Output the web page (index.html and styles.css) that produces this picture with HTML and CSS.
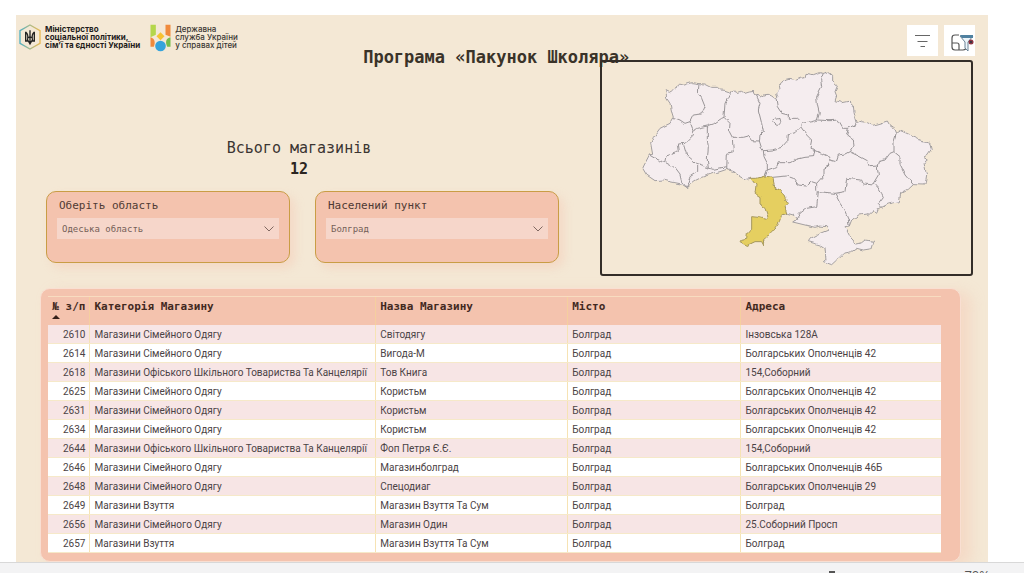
FILE: index.html
```html
<!DOCTYPE html>
<html lang="uk">
<head>
<meta charset="utf-8">
<title>Програма «Пакунок Школяра»</title>
<link rel="stylesheet" href="styles.css">
</head>
<body>
<main class="report">
  <header class="report-header">
    <div class="logos">
      <div class="logo">
        <svg class="logo-ministry" viewBox="0 0 66 78" aria-hidden="true">
          <defs><linearGradient id="hex" x1="0" x2="1"><stop offset="0" stop-color="#4fb0c4"/><stop offset=".5" stop-color="#a8b98a"/><stop offset="1" stop-color="#e9b952"/></linearGradient></defs>
          <path d="M33 3 63 20V58L33 75 3 58V20Z" fill="none" stroke="url(#hex)" stroke-width="4"/>
          <path d="M20 23V51H28L33 60 38 51H46V23M33 19V58M20 24C28 31 28 40 25 50M46 24C38 31 38 40 41 50M25 43Q33 35 41 43" fill="none" stroke="#222" stroke-width="4"/>
        </svg>
        <p class="logo-text logo-text-bold">Міністерство<br>соціальної політики,<br>сім’ї та єдності України</p>
      </div>
      <div class="logo">
        <svg class="logo-service" viewBox="0 0 62 84" aria-hidden="true">
          <path d="M1 2H17V32L1 40Z" fill="#b5d64a"/>
          <path d="M46 2H61V38L46 32Z" fill="#f08a3c"/>
          <path d="M31 25 43 37 31 49 19 37Z" fill="#f6c232"/>
          <path d="M1 40C12 43 17 53 11 68H1Z" fill="#f08a3c"/>
          <path d="M61 40C48 43 44 53 51 68H61Z" fill="#75bd4b"/>
          <circle cx="31" cy="66" r="16" fill="#35a3dc"/>
        </svg>
        <p class="logo-text">Державна<br>служба України<br>у справах дітей</p>
      </div>
    </div>
    <h1 class="title">Програма «Пакунок Школяра»</h1>
    <div class="actions">
      <button class="action" type="button" aria-label="Фільтри">
        <svg viewBox="0 0 31 31" aria-hidden="true"><path d="M8 10.500H23M10.500 16.500H20.500M13.500 21.500H18" fill="none" stroke="#666" stroke-width="1.200"/></svg>
      </button>
      <button class="action" type="button" aria-label="Очистити фільтри">
        <svg viewBox="0 0 31 31" aria-hidden="true">
          <path d="M15 10H11Q8 10 8 13V22Q8 25 11 25H19Q22 25 22 22V18M8 18H13Q15 18 15 20V25" fill="none" stroke="#555" stroke-width="1.200"/>
          <path d="M16 11H29L24 17V26L21 23V17Z" fill="#eef5fa" stroke="#6b8497"/>
          <path d="M16 10H29V13H18Z" fill="#4f81a0"/>
          <circle cx="27" cy="17" r="2.500" fill="#8d3441"/><path d="M26 16 28 18M28 16 26 18" stroke="#3e3542"/>
        </svg>
      </button>
    </div>
  </header>

  <section class="overview">
    <div class="summary">
      <div class="total">
        <p class="total-label">Всього магазинів</p>
        <p class="total-value">12</p>
      </div>
      <div class="slicers">
        <div class="slicer">
          <label class="slicer-label" for="region">Оберіть область</label>
          <div class="slicer-field">
            <select class="slicer-select" id="region"><option>Одеська область</option></select>
            <svg class="chevron" viewBox="0 0 10 6" aria-hidden="true"><path d="M.5.5 5 5 9.500.5"/></svg>
          </div>
        </div>
        <div class="slicer">
          <label class="slicer-label" for="city">Населений пункт</label>
          <div class="slicer-field">
            <select class="slicer-select" id="city"><option>Болград</option></select>
            <svg class="chevron" viewBox="0 0 10 6" aria-hidden="true"><path d="M.5.5 5 5 9.500.5"/></svg>
          </div>
        </div>
      </div>
    </div>
    <div class="map">
      <svg class="map-drawing" viewBox="-84 6 1107 636" role="img" aria-label="Мапа областей України">
        <defs><filter id="coast" x="-5%" y="-5%" width="110%" height="110%"><feTurbulence type="fractalNoise" baseFrequency=".06" numOctaves="1" seed="4"/><feDisplacementMap in="SourceGraphic" scale="13" xChannelSelector="R" yChannelSelector="G"/></filter></defs>
        <g filter="url(#coast)" stroke-linejoin="round">
          <path class="land" d="M108 92 118 97 140 84 145 72 160 76 185 68 207 71 225 72 245 82 262 82 272 90 285 91 302 97 312 93 322 98 335 94 345 100 358 96 372 94 378 108 384 106 390 111 402 104 415 103 425 108 438 117 444 112 440 98 450 88 448 76 460 60 480 55 500 60 510 55 525 52 528 40 550 44 568 38 580 40 595 36 608 46 608 65 622 78 615 95 620 108 615 122 635 128 655 124 670 138 672 155 682 190 695 185 712 188 728 196 750 190 772 183 780 197 795 208 800 220 812 212 835 222 860 232 865 242 900 250 904 268 892 285 880 292 895 300 882 310 890 345 885 375 850 374 835 388 812 400 808 425 775 432 755 442 745 448 740 460 730 452 712 468 715 458 690 462 665 480 658 498 645 500 650 510 660 530 678 552 695 548 705 540 732 544 725 566 700 570 680 565 665 575 640 580 620 600 605 614 580 605 588 598 585 565 570 555 535 545 542 535 570 520 595 510 588 500 570 498 555 502 525 495 488 486 500 478 490 465 472 460 455 465 362 355 345 358 330 350 312 335 290 328 270 335 250 340 215 352 195 362 170 382 155 372 120 365 100 360 75 362 50 345 38 325 45 310 58 285 68 283 62 250 70 232 90 205 120 190 130 172 125 155 120 130 110 115Z"/>
          <path class="border" d="M207 71 205 100 215 115 225 140 215 162 190 165 180 185 190 212M130 172 150 180 165 190 180 185M190 212 200 205 232 198 250 192 275 175 282 172M302 97 285 130 282 172 300 190 298 215 307 232M190 212 190 225 165 250 145 252 148 275 108 288 104 308M58 285 75 295 104 308 135 325 150 345 155 365 170 382M160 252 170 285 200 310 225 318 235 325M203 315 203 335 180 350 170 382M232 198 232 240 235 260 232 300 235 325 250 328 290 320M290 328 292 280 310 275 307 232 340 232 355 228 365 242 388 243M380 108 390 130 385 150 395 190 400 215 390 225 388 243 395 265 400 272 425 270 455 262 470 245 472 225 495 218 512 200M438 117 442 140 455 160 475 165 475 175 500 175 515 190M425 180 435 172 440 178 450 175 452 185 442 197 432 190Z"/>
          <path class="border" d="M580 40 572 60 575 80 560 110 562 135 568 160 562 180M515 190 545 185 562 180 600 182 625 180 640 205 655 205 682 190M515 190 512 200 530 225 545 240 540 265 555 268 550 290M412 330 440 320 445 308 480 308 500 298 525 292 550 290M550 270 575 280 595 290 600 300 618 305 625 285 645 282 658 275M655 205 650 225 670 240 672 255 658 275 690 290 712 302 718 320 742 318 745 305 765 300 780 280 792 275M800 218 792 245 792 275 810 290 810 315 825 345 850 374M742 318 745 345 730 370 742 380 755 400 760 410 745 430 755 442M732 375 700 372 695 360 650 355 645 395 615 400 630 430 640 445 655 480 658 498M615 400 565 395 560 440 530 445 510 460 495 482M428 352 470 348 490 355 505 375 530 378 545 365 560 370 560 395M600 300 595 318 582 325 582 345 560 370M400 272 402 290 412 310 412 330 405 348"/>
          <path class="land selected" d="M362 355 380 355 405 348 428 352 435 385 455 392 465 415 475 430 465 440 470 460 455 465 448 485 430 510 410 530 400 540 402 558 395 545 375 545 350 557 330 545 335 538 350 535 352 520 365 505 365 470 385 472 410 478 415 475 405 445 390 435 390 410 375 400 378 375Z"/>
        </g>
      </svg>
    </div>
  </section>

  <section class="table-card">
    <table class="shops">
      <colgroup><col class="col-id"><col class="col-category"><col class="col-name"><col class="col-city"><col class="col-address"></colgroup>
      <thead>
        <tr><th class="id" scope="col" aria-sort="ascending">№ з/п<span class="sort"></span></th><th scope="col">Категорія Магазину</th><th scope="col">Назва Магазину</th><th scope="col">Місто</th><th scope="col">Адреса</th></tr>
      </thead>
      <tbody>
        <tr><td class="id">2610</td><td>Магазини Сімейного Одягу</td><td>Світодягу</td><td>Болград</td><td>Інзовська 128А</td></tr>
        <tr><td class="id">2614</td><td>Магазини Сімейного Одягу</td><td>Вигода-М</td><td>Болград</td><td>Болгарських Ополченців 42</td></tr>
        <tr><td class="id">2618</td><td>Магазини Офіського Шкільного Товариства Та Канцелярії</td><td>Тов Книга</td><td>Болград</td><td>154,Соборний</td></tr>
        <tr><td class="id">2625</td><td>Магазини Сімейного Одягу</td><td>Користьм</td><td>Болград</td><td>Болгарських Ополченців 42</td></tr>
        <tr><td class="id">2631</td><td>Магазини Сімейного Одягу</td><td>Користьм</td><td>Болград</td><td>Болгарських Ополченців 42</td></tr>
        <tr><td class="id">2634</td><td>Магазини Сімейного Одягу</td><td>Користьм</td><td>Болград</td><td>Болгарських Ополченців 42</td></tr>
        <tr><td class="id">2644</td><td>Магазини Офіського Шкільного Товариства Та Канцелярії</td><td>Фоп Петря Є.Є.</td><td>Болград</td><td>154,Соборний</td></tr>
        <tr><td class="id">2646</td><td>Магазини Сімейного Одягу</td><td>Магазинболград</td><td>Болград</td><td>Болгарських Ополченців 46Б</td></tr>
        <tr><td class="id">2648</td><td>Магазини Сімейного Одягу</td><td>Спецодиаг</td><td>Болград</td><td>Болгарських Ополченців 29</td></tr>
        <tr><td class="id">2649</td><td>Магазини Взуття</td><td>Магазин Взуття Та Сум</td><td>Болград</td><td>Болград</td></tr>
        <tr><td class="id">2656</td><td>Магазини Сімейного Одягу</td><td>Магазин Один</td><td>Болград</td><td>25.Соборний Просп</td></tr>
        <tr><td class="id">2657</td><td>Магазини Взуття</td><td>Магазин Взуття Та Сум</td><td>Болград</td><td>Болград</td></tr>
      </tbody>
    </table>
  </section>
</main>
<footer class="status-bar">
  <span class="zoom-handle"></span>
  <span class="zoom-value">70%</span>
</footer>
</body>
</html>
```
FILE: styles.css
```css
* { box-sizing: border-box; }

body {
  display: flex;
  flex-direction: column;
  height: 100vh;
  margin: 0;
  overflow: hidden;
  background: #fff;
  color: #3b3532;
  font-family: "Open Sans", "Noto Sans", sans-serif;
}

h1, p { margin: 0; }

.report {
  flex: none;
  margin: 15px 36px 0 16px;
  overflow: hidden;
  background: #f4e8d5;
}

.report-header {
  display: grid;
  grid-template-columns: 36% auto 1fr;
  min-height: 52px;
  padding: 0 13px 0 3px;
}

.logos { display: flex; gap: 10px; align-items: flex-start; padding-top: 9px; }
.logo { display: flex; gap: 4px; align-items: flex-start; white-space: nowrap; }
.logo-ministry { width: 22px; height: 26px; }
.logo-service { width: 21px; height: 28px; }
.logo-text { padding-top: 1px; font: 500 8px/8px Inter, sans-serif; color: #3a3632; }
.logo-text-bold { font-weight: 700; color: #1f1d1b; }

.title {
  align-self: end;
  font: 700 17px/20px "DejaVu Sans Mono", monospace;
  white-space: nowrap;
  color: #3a3329;
}

.actions { display: flex; gap: 6px; justify-content: flex-end; align-items: flex-start; padding-top: 10px; }
.action { width: 31px; height: 31px; padding: 0; border: 0; background: #fff; }
.action svg { display: block; width: 100%; }

.overview {
  display: grid;
  grid-template-columns: 584fr 373fr;
  padding-right: 15px;
}

.summary {
  display: flex;
  flex-direction: column;
  gap: 11px;
  padding: 71px 41px 0 30px;
}

.total {
  padding-right: 7px;
  font: 15px/21px "DejaVu Sans Mono", monospace;
  text-align: center;
}
.total-value { font-weight: 700; color: #2b2521; }

.slicers { display: grid; grid-template-columns: 1fr 1fr; gap: 25px; }

.slicer {
  padding: 6px 10px 23px;
  border: 1px solid #c99d45;
  border-radius: 10px;
  background: #f4c3ae;
  box-shadow: 5px 5px 10px rgba(244, 194, 174, 0.4);
}

.slicer-label {
  display: block;
  margin-bottom: 5px;
  padding-left: 2px;
  font: 11px/15px "DejaVu Sans Mono", monospace;
  color: #4f3a33;
}

.slicer-field { position: relative; }

.slicer-select {
  display: block;
  width: 100%;
  height: 21px;
  padding: 0 24px 0 5px;
  border: 0;
  border-radius: 0;
  appearance: none;
  background: #f6d6ca;
  font: 9px/12px "DejaVu Sans Mono", monospace;
  color: #755f58;
}

.chevron {
  position: absolute;
  top: 8px;
  right: 5px;
  width: 10px;
  height: 6px;
  fill: none;
  stroke: #806861;
  pointer-events: none;
}

.map {
  margin-top: -7px;
  border: 2px solid #332d28;
  border-radius: 3px;
}
.map-drawing { display: block; width: 100%; }
.land { fill: #f5edef; stroke: #a39fa0; stroke-width: 3; }
.border { fill: none; stroke: #999597; stroke-width: 3; }
.selected { fill: #e5cf60; stroke: #a4975e; }

.table-card {
  margin: 12px 27px 0 24px;
  padding: 7px 19px 8px 7px;
  border: 1px solid #f9dfd2;
  border-radius: 10px;
  background: #f4c3ae;
  box-shadow: 10px 4px 14px rgba(244, 194, 174, 0.4);
}

.shops {
  width: 100%;
  border-collapse: collapse;
  table-layout: fixed;
  font-family: Roboto, "Noto Sans", sans-serif;
  font-size: 10px;
  line-height: 16px;
  white-space: nowrap;
}
.col-id { width: 4.7%; }
.col-category { width: 32%; }
.col-name { width: 21.5%; }
.col-city { width: 19.4%; }
.col-address { width: 22.4%; }

.shops th,
.shops td {
  padding: 2px 4px 0;
  border-left: 1px solid #f6e3b4;
  text-align: left;
}
.shops th:first-child,
.shops td:first-child { border-left: 0; }

.shops th {
  height: 28px;
  padding-top: 3px;
  border-top: 1px solid #f8dcc0;
  border-left-color: #f5cf9f;
  font: 700 11px/14px "DejaVu Sans Mono", monospace;
  vertical-align: top;
  color: #42291f;
}

.shops td { height: 19px; border-bottom: 1px solid #f6e9c9; color: #4b4345; }
.shops tbody tr { background: #fff; }
.shops tbody tr:nth-child(odd) { background: #f7e5e5; }
.shops .id { text-align: right; }

.sort {
  display: block;
  width: 8px;
  margin-top: 1px;
  border: 4px solid transparent;
  border-top: 0;
  border-bottom-color: #35211a;
}

.status-bar {
  display: flex;
  flex: none;
  gap: 129px;
  justify-content: flex-end;
  align-items: flex-start;
  padding: 4px 34px 0 0;
  border-top: 1px solid #d8d8d8;
  background: #f3f3f4;
  font-size: 13px;
  line-height: 16px;
  color: #555;
}
.zoom-handle { width: 6px; height: 14px; margin-top: 4px; background: #555; }
```
